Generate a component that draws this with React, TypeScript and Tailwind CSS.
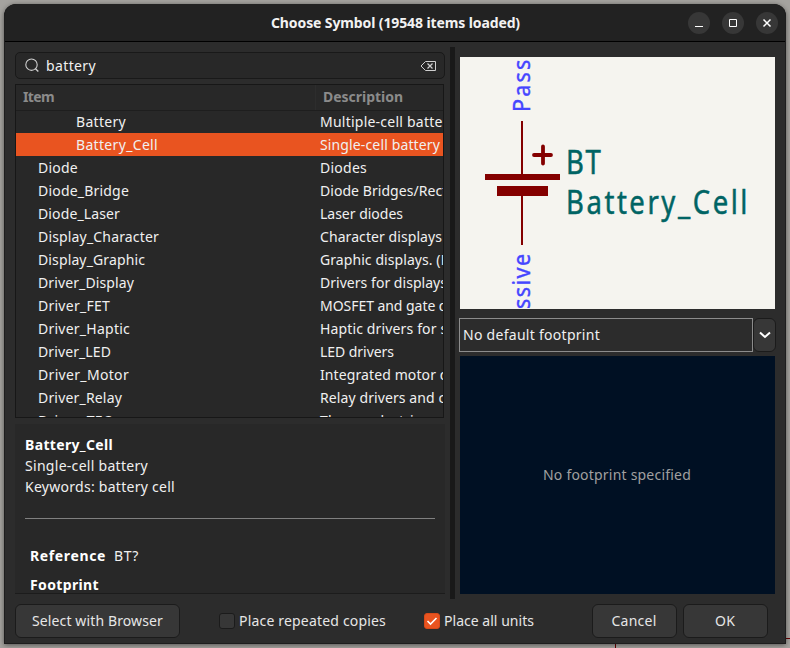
import { useLayoutEffect, useRef } from "react";
import clsx from "clsx";

type FitProps = { text: string; width: number; className?: string };

/** A single line of text whose tracking is adjusted to fill a given width. */
function Fit({ text, width, className }: FitProps) {
  const ref = useRef<HTMLSpanElement>(null);
  useLayoutEffect(() => {
    const el = ref.current;
    if (!el) return;
    el.style.letterSpacing = "0px";
    const natural = el.getBoundingClientRect().width;
    el.style.letterSpacing = `${(width - natural) / text.length}px`;
  }, [text, width]);
  return (
    <span ref={ref} className={clsx("inline-block shrink-0 whitespace-pre", className)}>
      {text}
    </span>
  );
}

type Row = { item: string; iw: number; desc: string; dw: number; child?: boolean; selected?: boolean };

const rows: Row[] = [
  { item: "Battery", iw: 50, desc: "Multiple-cell battery", dw: 136, child: true },
  { item: "Battery_Cell", iw: 82, desc: "Single-cell battery", dw: 120, child: true, selected: true },
  { item: "Diode", iw: 40, desc: "Diodes", dw: 47 },
  { item: "Diode_Bridge", iw: 91, desc: "Diode Bridges/Rectifiers", dw: 160 },
  { item: "Diode_Laser", iw: 82, desc: "Laser diodes", dw: 83 },
  { item: "Display_Character", iw: 121, desc: "Character displays", dw: 122 },
  { item: "Display_Graphic", iw: 107, desc: "Graphic displays. (Pixel)", dw: 156 },
  { item: "Driver_Display", iw: 96, desc: "Drivers for displays", dw: 127 },
  { item: "Driver_FET", iw: 72, desc: "MOSFET and gate drivers", dw: 164 },
  { item: "Driver_Haptic", iw: 92, desc: "Haptic drivers for small", dw: 156 },
  { item: "Driver_LED", iw: 73, desc: "LED drivers", dw: 74 },
  { item: "Driver_Motor", iw: 91, desc: "Integrated motor drivers", dw: 166 },
  { item: "Driver_Relay", iw: 84, desc: "Relay drivers and controllers", dw: 190 },
  { item: "Driver_TEC", iw: 74, desc: "Thermoelectric cooler", dw: 146 },
];

function TitleBar() {
  return (
    <header className="flex h-[38px] shrink-0 items-center border-b border-black bg-[#222222] pr-2">
      <div className="flex flex-1 pl-[267px] font-bold text-[#f2f2f2]">
        <Fit text="Choose Symbol (19548 items loaded)" width={249} className="text-[14px]" />
      </div>
      <div className="flex gap-3">
        {["M7 14.5h8", "M7.5 7.5h7v7h-7z", "M7.5 7.5l7 7m0-7l-7 7"].map((d, i) => (
          <svg key={d} width="22" height="22" viewBox="0 0 22 22" className="rounded-full bg-[#373737]">
            <path d={d} fill="none" stroke="#fff" strokeWidth={i === 2 ? 1.5 : 1} />
          </svg>
        ))}
      </div>
    </header>
  );
}

function SearchBox() {
  return (
    <div className="flex h-[27px] w-[430px] items-center rounded-[5px] border border-[#191919] bg-[#282828] pr-2 pl-[9px]">
      <svg width="16" height="16" viewBox="0 0 16 16" className="mr-[5px]">
        <circle cx="6.5" cy="6.7" r="5.7" fill="none" stroke="#cfcfcf" strokeWidth="1.1" />
        <path d="M10.500 10.700l2.800 2.800" stroke="#cfcfcf" strokeWidth="1.4" />
      </svg>
      <Fit text="battery" width={50} />
      <svg width="16" height="12" viewBox="0 0 16 12" className="ml-auto">
        <path d="M5.5 1.5h10v9h-10L1 6z" fill="none" stroke="#cfcfcf" strokeWidth="1" />
        <path d="M7.500 3.500l5 5m0-5l-5 5" stroke="#cfcfcf" strokeWidth="1.2" />
      </svg>
    </div>
  );
}

function SymbolTable() {
  return (
    <div className="mt-[5px] flex h-[334px] w-[429px] flex-col overflow-hidden border border-[#171717] bg-[#282828]">
      <div className="flex h-[26px] shrink-0 items-center border-b border-[#1e1e1e] font-bold text-[#8b8b8b]">
        <div className="h-full w-[300px] border-r border-[#2d2d2d] pt-px pl-[7px]">
          <Fit text="Item" width={31} className="text-[14px]" />
        </div>
        <div className="h-full pt-px pl-[7px]">
          <Fit text="Description" width={80} className="text-[14px]" />
        </div>
      </div>
      <div className="-mt-px min-h-0 flex-1 overflow-hidden">
        {rows.map((r) => (
          <div key={r.item} className={clsx("flex h-[23px] items-center", r.selected && "bg-[#e95420]")}>
            <div className={clsx("flex w-[304px] shrink-0", r.child ? "pl-[60px]" : "pl-[22px]")}>
              <Fit text={r.item} width={r.iw} />
            </div>
            <Fit text={r.desc} width={r.dw} />
          </div>
        ))}
      </div>
    </div>
  );
}

function Details() {
  return (
    <div className="mt-[6px] h-[170px] w-[430px] overflow-hidden border-b border-[#1c1c1c] bg-[#282828] px-[10px] pt-[10px] leading-[21px]">
      <div className="flex font-bold text-white"><Fit text="Battery_Cell" width={88} /></div>
      <div className="flex"><Fit text="Single-cell battery" width={123} /></div>
      <div className="flex"><Fit text="Keywords: battery cell" width={150} /></div>
      <div className="mt-[21px] h-px bg-[#808080]" />
      <div className="mt-[26px] flex pl-[5px]">
        <Fit text="Reference" width={76} className="mr-[8px] font-bold text-white" />
        <Fit text="BT?" width={25} />
      </div>
      <div className="mt-[8px] flex pl-[5px] font-bold text-white"><Fit text="Footprint" width={69} /></div>
    </div>
  );
}

function SymbolPreview() {
  return (
    <svg width="315" height="252" viewBox="460 57 315 252" className="ml-px block bg-[#f5f4ef]" fontFamily="'Noto Sans', sans-serif">
      <g fill="#840000">
        <rect x="521" y="121" width="2" height="54" />
        <rect x="485" y="174" width="75" height="6" />
        <rect x="497" y="186" width="51" height="10" />
        <rect x="521" y="196" width="2" height="49" />
      </g>
      <path d="M534 155h17M543 146.500v17" stroke="#840000" strokeWidth="3.8" strokeLinecap="round" />
      <g fill="#006464" stroke="#006464" strokeWidth="0.5" fontSize="32">
        <text transform="translate(566 173.500) scale(.86 1)" letterSpacing="2">BT</text>
        <text transform="translate(566 214) scale(.86 1)" textLength="211" lengthAdjust="spacing">Battery_Cell</text>
      </g>
      <g fill="#4545ff" stroke="#4545ff" strokeWidth="0.4" fontSize="23.5">
        <text transform="translate(530 112) rotate(-90) scale(.92 1)" textLength="57">Pass</text>
        <text transform="translate(530 309) rotate(-90) scale(.92 1)" textLength="60">ssive</text>
      </g>
    </svg>
  );
}

function FootprintSelect() {
  return (
    <div className="mt-[9px] flex h-[34px]">
      <div className="flex w-[294px] items-center border border-[#8c8c8c] pb-[2px] pl-[3px]">
        <Fit text="No default footprint" width={137} />
      </div>
      <button className="flex w-[23px] items-center justify-center rounded-[6px] border border-[#1b1b1b] bg-[#373737]">
        <svg width="12" height="8" viewBox="0 0 12 8">
          <path d="M1 1.5l5 4.500 5-4.500" fill="none" stroke="#fff" strokeWidth="2" />
        </svg>
      </button>
    </div>
  );
}

function Button({ text, width, className }: FitProps) {
  return (
    <button className={clsx("flex h-[34px] items-center justify-center rounded-[6px] border border-[#1b1b1b] bg-[#373737] pb-[2px]", className)}>
      <Fit text={text} width={width} />
    </button>
  );
}

function Check({ text, width, checked }: FitProps & { checked?: boolean }) {
  return (
    <label className="flex items-center gap-1">
      <span className={clsx("flex h-4 w-4 items-center justify-center rounded-[3px] border", checked ? "border-[#d94a19] bg-[#e95420]" : "border-[#1b1b1b] bg-[#373737]")}>
        {checked && (
          <svg width="12" height="12" viewBox="0 0 12 12">
            <path d="M1.5 6l3 3L10.500 3" fill="none" stroke="#fff" strokeWidth="1.6" />
          </svg>
        )}
      </span>
      <Fit text={text} width={width} className="pb-[2px]" />
    </label>
  );
}

export default function App() {
  return (
    <div className="relative h-[648px] w-[790px] overflow-hidden bg-[#a5a39f] pt-1 pl-1 font-['Noto_Sans',sans-serif] text-[14px] text-[#f0f0f0]">
      <div className="absolute top-[638px] left-[785px] h-px w-[5px] bg-[#690000]" />
      <div className="absolute top-[643px] left-[615px] h-[5px] w-px bg-[#690000]" />
      <div className="relative flex h-[640px] w-[782px] flex-col overflow-hidden rounded-t-[12px] bg-[#2c2c2c] shadow-[0_1px_5px_rgba(0,0,0,0.5)]">
        <TitleBar />
        <main className="flex h-[557px] shrink-0">
          <section className="w-[446px] pt-[10px] pl-[11px]">
            <SearchBox />
            <SymbolTable />
            <Details />
          </section>
          <div className="mt-[5px] h-[552px] w-[5px] bg-[#191919]" />
          <section className="pt-[15px] pl-[4px]">
            <SymbolPreview />
            <FootprintSelect />
            <div className="mt-[4px] ml-px flex h-[238px] w-[315px] items-center justify-center bg-[#001023] pr-px pb-[2px] text-[#a0a0a0]">
              <Fit text="No footprint specified" width={148} />
            </div>
          </section>
        </main>
        <footer className="flex items-start pt-[5px] pl-[11px] text-[#e6e6e6]">
          <Button text="Select with Browser" width={131} className="w-[165px]" />
          <div className="ml-[39px] flex h-[34px] w-[373px] items-center">
            <div className="w-[205px]"><Check text="Place repeated copies" width={147} /></div>
            <Check text="Place all units" width={90} checked />
          </div>
          <Button text="Cancel" width={45} className="w-[85px] pr-px" />
          <Button text="OK" width={20} className="ml-[6px] w-[85px] pr-px" />
        </footer>
        <div className="pointer-events-none absolute inset-0 rounded-t-[12px] border-r border-b border-l border-[#1e1e1e]" />
      </div>
    </div>
  );
}
